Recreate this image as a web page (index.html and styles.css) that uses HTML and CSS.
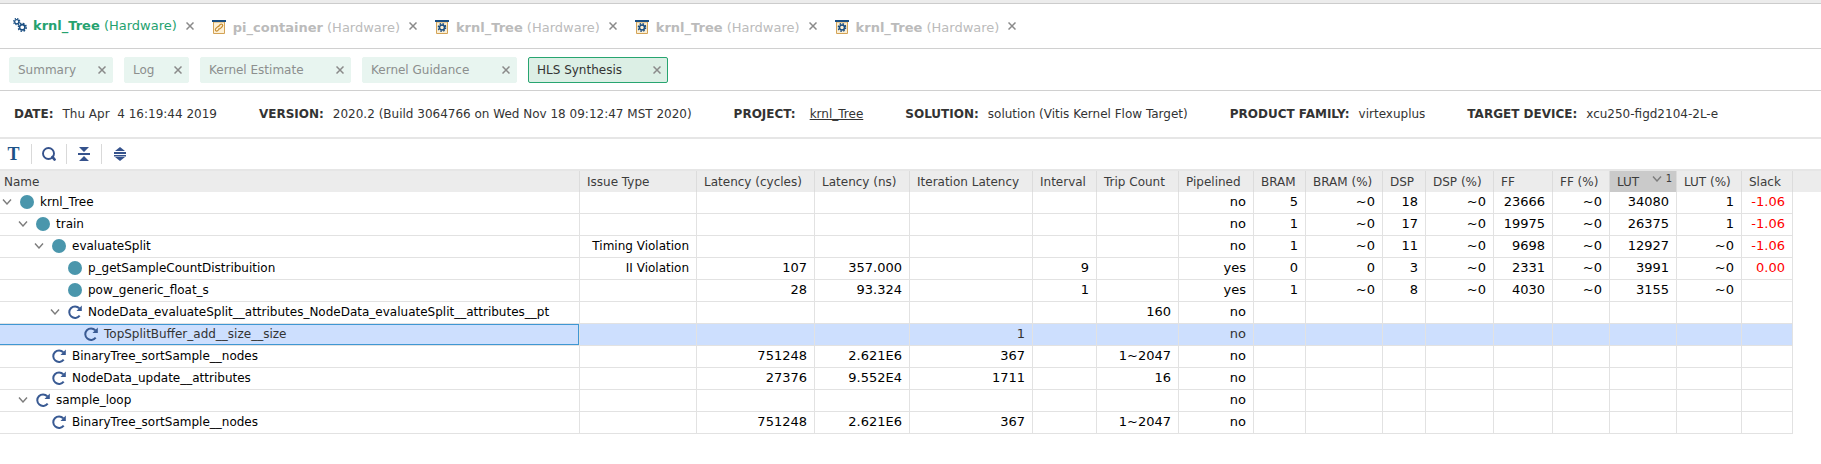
FILE: index.html
```html
<!DOCTYPE html>
<html lang="en">
<head>
<meta charset="utf-8">
<title>krnl_Tree - HLS Synthesis</title>
<link rel="stylesheet" href="styles.css">
</head>
<body>
<svg class="defs" aria-hidden="true">
  <symbol id="close" viewBox="0 0 8 8"><path d="M.5.5l7 7M7.500.500l-7 7" fill="none" stroke="#8a8a8a" stroke-width="1.500"/></symbol>
  <symbol id="gear" viewBox="0 0 10 10"><circle cx="5" cy="5" r="2.800" fill="none" stroke="#1b4f82" stroke-width="1.700"/><circle cx="5" cy="5" r="4.200" fill="none" stroke="#1b4f82" stroke-width="1.600" stroke-dasharray="1.800 1.500"/></symbol>
  <symbol id="gears" viewBox="0 0 14 14"><use href="#gear" x="0" y="0" width="7.500" height="7.500"/><use href="#gear" x="4.500" y="4.500" width="9.500" height="9.500"/></symbol>
  <symbol id="kernel" viewBox="0 0 14 14"><path d="M1.500 2h11v11.500h-11z" fill="#fbeed3" stroke="#d3a356"/><path d="M0 0h14v2H0z" fill="#1b4f82"/><use href="#gear" x="2.500" y="3" width="9" height="9"/></symbol>
  <symbol id="container" viewBox="0 0 14 14"><path d="M1.500 2h11v11.500h-11z" fill="#fdf0d6" stroke="#d3a356"/><path d="M0 0h14v2H0z" fill="#1b4f82"/><path d="M6.600 6.200l1.700-1.700a1.400 1.400 0 0 1 2 2L8.500 8.300a1.400 1.400 0 0 1-1.900 0M7.400 8.900l-1.700 1.700a1.400 1.400 0 0 1-2-2l1.800-1.800a1.400 1.400 0 0 1 1.900 0" fill="none" stroke="#c58a2c" stroke-width="1.100"/></symbol>
  <symbol id="chevron" viewBox="0 0 10 6"><path d="M1 .500l4 4.500 4-4.500" fill="none" stroke="#7c7c7c" stroke-width="1.400"/></symbol>
  <symbol id="func" viewBox="0 0 14 14"><circle cx="7" cy="7" r="7" fill="#4a96ac"/></symbol>
  <symbol id="loop" viewBox="0 0 14 14"><path d="M11.300 3.200A5.800 5.800 0 1 0 11.700 10.700" fill="none" stroke="#395a93" stroke-width="2"/><path d="M13.800.500v5.500H8.500z" fill="#395a93"/></symbol>
</svg>

<nav class="tabs" aria-label="Open reports">
  <div class="tab active"><svg class="icon"><use href="#gears"/></svg><a href="#" class="tab-title"><b>krnl_Tree</b> (Hardware)</a><button class="close" aria-label="Close krnl_Tree"><svg><use href="#close"/></svg></button></div>
  <div class="tab"><svg class="icon"><use href="#container"/></svg><a href="#" class="tab-title"><b>pi_container</b> (Hardware)</a><button class="close" aria-label="Close pi_container"><svg><use href="#close"/></svg></button></div>
  <div class="tab"><svg class="icon"><use href="#kernel"/></svg><a href="#" class="tab-title"><b>krnl_Tree</b> (Hardware)</a><button class="close" aria-label="Close krnl_Tree"><svg><use href="#close"/></svg></button></div>
  <div class="tab"><svg class="icon"><use href="#kernel"/></svg><a href="#" class="tab-title"><b>krnl_Tree</b> (Hardware)</a><button class="close" aria-label="Close krnl_Tree"><svg><use href="#close"/></svg></button></div>
  <div class="tab"><svg class="icon"><use href="#kernel"/></svg><a href="#" class="tab-title"><b>krnl_Tree</b> (Hardware)</a><button class="close" aria-label="Close krnl_Tree"><svg><use href="#close"/></svg></button></div>
</nav>

<nav class="views" aria-label="Views">
  <div class="view w-summary"><a href="#">Summary</a><button class="close" aria-label="Close Summary"><svg><use href="#close"/></svg></button></div>
  <div class="view w-log"><a href="#">Log</a><button class="close" aria-label="Close Log"><svg><use href="#close"/></svg></button></div>
  <div class="view w-estimate"><a href="#">Kernel Estimate</a><button class="close" aria-label="Close Kernel Estimate"><svg><use href="#close"/></svg></button></div>
  <div class="view w-guidance"><a href="#">Kernel Guidance</a><button class="close" aria-label="Close Kernel Guidance"><svg><use href="#close"/></svg></button></div>
  <div class="view w-hls current"><a href="#" aria-current="page">HLS Synthesis</a><button class="close" aria-label="Close HLS Synthesis"><svg><use href="#close"/></svg></button></div>
</nav>

<dl class="info">
  <div><dt>DATE:</dt><dd>Thu Apr  4 16:19:44 2019</dd></div>
  <div><dt>VERSION:</dt><dd>2020.2 (Build 3064766 on Wed Nov 18 09:12:47 MST 2020)</dd></div>
  <div class="project"><dt>PROJECT:</dt><dd><a href="#">krnl_Tree</a></dd></div>
  <div><dt>SOLUTION:</dt><dd>solution (Vitis Kernel Flow Target)</dd></div>
  <div><dt>PRODUCT FAMILY:</dt><dd>virtexuplus</dd></div>
  <div><dt>TARGET DEVICE:</dt><dd>xcu250-figd2104-2L-e</dd></div>
</dl>

<div class="toolbar" role="toolbar" aria-label="Table tools">
  <button class="tool text-tool" aria-label="Text">T</button>
  <button class="tool" aria-label="Search"><svg viewBox="0 0 14 14"><circle cx="6.500" cy="6.500" r="5.500" fill="none" stroke="#35528c" stroke-width="1.900"/><path d="M10.500 10l2 2.500" stroke="#35528c" stroke-width="2.800" stroke-linecap="round"/></svg></button>
  <button class="tool" aria-label="Collapse all"><svg viewBox="0 0 14 14"><path d="M2 0h10L7 5zM1 6h12v2H1zM7 9l5 5H2z" fill="#35528c"/></svg></button>
  <button class="tool" aria-label="Expand all"><svg viewBox="0 0 14 14"><path d="M7 0l5 4H2zM1 5h12v2H1zM1 8h12v1.500H1zM2 10h10l-5 4z" fill="#35528c"/></svg></button>
</div>

<main class="report">
<table>
  <colgroup><col class="c-name"><col class="c-issue"><col class="c-cycles"><col class="c-ns"><col class="c-iter"><col class="c-int"><col class="c-trip"><col class="c-pipe"><col class="c-bram"><col class="c-bramp"><col class="c-dsp"><col class="c-dspp"><col class="c-ff"><col class="c-ffp"><col class="c-lut"><col class="c-lutp"><col class="c-slack"><col></colgroup>
  <thead>
    <tr><th>Name</th><th>Issue Type</th><th>Latency (cycles)</th><th>Latency (ns)</th><th>Iteration Latency</th><th>Interval</th><th>Trip Count</th><th>Pipelined</th><th>BRAM</th><th>BRAM (%)</th><th>DSP</th><th>DSP (%)</th><th>FF</th><th>FF (%)</th><th class="sorted" aria-sort="descending"><button class="sort"><span>LUT</span><svg><use href="#chevron"/></svg><small>1</small></button></th><th>LUT (%)</th><th>Slack</th><td class="rest"></td></tr>
  </thead>
  <tbody>
    <tr><th><div class="node l0"><button class="toggle" aria-label="Collapse"><svg><use href="#chevron"/></svg></button><svg class="icon"><use href="#func"/></svg>krnl_Tree</div></th><td></td><td></td><td></td><td></td><td></td><td></td><td>no</td><td>5</td><td>~0</td><td>18</td><td>~0</td><td>23666</td><td>~0</td><td>34080</td><td>1</td><td class="bad">-1.06</td></tr>
    <tr><th><div class="node l1"><button class="toggle" aria-label="Collapse"><svg><use href="#chevron"/></svg></button><svg class="icon"><use href="#func"/></svg>train</div></th><td></td><td></td><td></td><td></td><td></td><td></td><td>no</td><td>1</td><td>~0</td><td>17</td><td>~0</td><td>19975</td><td>~0</td><td>26375</td><td>1</td><td class="bad">-1.06</td></tr>
    <tr><th><div class="node l2"><button class="toggle" aria-label="Collapse"><svg><use href="#chevron"/></svg></button><svg class="icon"><use href="#func"/></svg>evaluateSplit</div></th><td class="issue">Timing Violation</td><td></td><td></td><td></td><td></td><td></td><td>no</td><td>1</td><td>~0</td><td>11</td><td>~0</td><td>9698</td><td>~0</td><td>12927</td><td>~0</td><td class="bad">-1.06</td></tr>
    <tr><th><div class="node leaf l3"><svg class="icon"><use href="#func"/></svg>p_getSampleCountDistribuition</div></th><td class="issue">II Violation</td><td>107</td><td>357.000</td><td></td><td>9</td><td></td><td>yes</td><td>0</td><td>0</td><td>3</td><td>~0</td><td>2331</td><td>~0</td><td>3991</td><td>~0</td><td class="bad">0.00</td></tr>
    <tr><th><div class="node leaf l3"><svg class="icon"><use href="#func"/></svg>pow_generic_float_s</div></th><td></td><td>28</td><td>93.324</td><td></td><td>1</td><td></td><td>yes</td><td>1</td><td>~0</td><td>8</td><td>~0</td><td>4030</td><td>~0</td><td>3155</td><td>~0</td><td></td></tr>
    <tr><th><div class="node l3"><button class="toggle" aria-label="Collapse"><svg><use href="#chevron"/></svg></button><svg class="icon"><use href="#loop"/></svg>NodeData_evaluateSplit__attributes_NodeData_evaluateSplit__attributes__pt</div></th><td></td><td></td><td></td><td></td><td></td><td>160</td><td>no</td><td></td><td></td><td></td><td></td><td></td><td></td><td></td><td></td><td></td></tr>
    <tr class="selected"><th><div class="node leaf l4"><svg class="icon"><use href="#loop"/></svg>TopSplitBuffer_add__size__size</div></th><td></td><td></td><td></td><td>1</td><td></td><td></td><td>no</td><td></td><td></td><td></td><td></td><td></td><td></td><td></td><td></td><td></td></tr>
    <tr><th><div class="node leaf l2"><svg class="icon"><use href="#loop"/></svg>BinaryTree_sortSample__nodes</div></th><td></td><td>751248</td><td>2.621E6</td><td>367</td><td></td><td>1~2047</td><td>no</td><td></td><td></td><td></td><td></td><td></td><td></td><td></td><td></td><td></td></tr>
    <tr><th><div class="node leaf l2"><svg class="icon"><use href="#loop"/></svg>NodeData_update__attributes</div></th><td></td><td>27376</td><td>9.552E4</td><td>1711</td><td></td><td>16</td><td>no</td><td></td><td></td><td></td><td></td><td></td><td></td><td></td><td></td><td></td></tr>
    <tr><th><div class="node l1"><button class="toggle" aria-label="Collapse"><svg><use href="#chevron"/></svg></button><svg class="icon"><use href="#loop"/></svg>sample_loop</div></th><td></td><td></td><td></td><td></td><td></td><td></td><td>no</td><td></td><td></td><td></td><td></td><td></td><td></td><td></td><td></td><td></td></tr>
    <tr><th><div class="node leaf l2"><svg class="icon"><use href="#loop"/></svg>BinaryTree_sortSample__nodes</div></th><td></td><td>751248</td><td>2.621E6</td><td>367</td><td></td><td>1~2047</td><td>no</td><td></td><td></td><td></td><td></td><td></td><td></td><td></td><td></td><td></td></tr>
  </tbody>
</table>
</main>
</body>
</html>
```
FILE: styles.css
```css
* { box-sizing: border-box; }

body {
  margin: 0;
  border-top: 3px solid #ececec;
  background: #fff;
  color: #000;
  font: 12px/16px "DejaVu Sans", sans-serif;
  white-space: nowrap;
}

button {
  margin: 0;
  padding: 0;
  border: 0;
  background: none;
  color: inherit;
  font: inherit;
  cursor: pointer;
}

a { color: inherit; text-decoration: none; }
svg { display: block; flex: none; }
.defs { position: absolute; width: 0; height: 0; }
.icon { width: 14px; height: 14px; }
.close svg { width: 8px; height: 8px; }

.tabs {
  display: flex;
  align-items: flex-start;
  gap: 18px;
  padding: 14px 13px;
  height: 46px;
  border-top: 1px solid #ccc;
  border-bottom: 1px solid #d0d0d0;
  font-size: 13px;
}

.tab {
  display: flex;
  align-items: flex-start;
  color: #bbb;
}

.tab .icon { margin: 2px 7px 0 0; }
.tab .close { margin: 4px 0 0 9px; }
.tab-title { padding-top: 2px; }
.tab.active { color: #25a26f; }
.tab.active .icon { margin: 0 6px 0 0; }
.tab.active .tab-title { padding-top: 0; }

.views {
  display: flex;
  gap: 11px;
  padding: 8px 9px 7px;
  border-bottom: 1px solid #d0d0d0;
}

.view {
  display: flex;
  align-items: center;
  justify-content: space-between;
  height: 26px;
  padding: 0 6px 0 8px;
  border: 1px solid #e8f5f0;
  border-radius: 2px;
  background: #e8f5f0;
  color: #8c8f8e;
}

.view.current {
  border-color: #27a570;
  background: #dcefe5;
  color: #333;
}

.w-summary { width: 104px; }
.w-log { width: 65px; }
.w-estimate { width: 151px; }
.w-guidance { width: 155px; }
.w-hls { width: 140px; }

.info {
  display: flex;
  gap: 42px;
  margin: 0;
  padding: 15px 14px;
  border-bottom: 2px solid #e6e6e6;
  color: #333;
  white-space: pre;
}

.info div { display: flex; gap: 9px; }
.info .project { gap: 14px; }
.info dt { font-weight: bold; }
.info dd { margin: 0; }
.info a { text-decoration: underline; }

.toolbar {
  display: flex;
  align-items: center;
  height: 32px;
  padding-bottom: 1px;
  border-bottom: 2px solid #e6e6e6;
}

.tool {
  display: flex;
  align-items: center;
  justify-content: center;
  width: 35px;
  height: 20px;
  border-right: 1px solid #d9d9d9;
}

.tool:first-child { width: 32px; padding-right: 4px; }
.tool:last-child { border-right: 0; }
.tool svg { width: 14px; height: 14px; }
.text-tool { color: #1b5288; font: bold 18px/20px "Liberation Serif", serif; }

table {
  width: 100%;
  border-collapse: separate;
  border-spacing: 0;
  table-layout: fixed;
}

.c-name { width: 580px; }
.c-issue { width: 117px; }
.c-cycles { width: 118px; }
.c-ns { width: 95px; }
.c-iter { width: 123px; }
.c-int { width: 64px; }
.c-trip { width: 82px; }
.c-pipe { width: 75px; }
.c-bram { width: 52px; }
.c-bramp { width: 77px; }
.c-dsp { width: 43px; }
.c-dspp { width: 68px; }
.c-ff { width: 59px; }
.c-ffp { width: 57px; }
.c-lut { width: 67px; }
.c-lutp { width: 65px; }
.c-slack { width: 51px; }

th, td { padding: 0; font-weight: normal; }

thead th, .rest {
  height: 21px;
  padding-left: 7px;
  border-right: 1px solid #dcdcdc;
  background: #ececec;
  color: #3c3c3c;
  text-align: left;
}

thead th:first-child { padding-left: 4px; }
.rest { border-right: 0; }
thead .sorted { background: #cacaca; }

.sort { display: flex; align-items: flex-start; width: 100%; padding-right: 4px; }
.sort svg { width: 10px; height: 6px; margin: 2px 4px 0 auto; }
.sort small { font-size: 10px; line-height: 10px; }

tbody th, tbody td {
  height: 22px;
  border-right: 1px solid #e2e2e2;
  border-bottom: 1px solid #e2e2e2;
}

tbody td { padding: 0 7px 1px 0; font-size: 13px; text-align: right; }
tbody .issue { font-size: 12px; }
.bad { color: #f00; }

.node { display: flex; align-items: center; height: 21px; padding-bottom: 1px; }
.node .icon { margin-right: 6px; }
.toggle { flex: none; width: 18px; }
.toggle svg { width: 10px; height: 6px; }
.l0 { padding-left: 2px; }
.l1 { padding-left: 18px; }
.l2 { padding-left: 34px; }
.l3 { padding-left: 50px; }
.leaf.l2 { padding-left: 52px; }
.leaf.l3 { padding-left: 68px; }
.leaf.l4 { padding-left: 84px; }

.selected { background: #cddffe; color: #333; }
.selected th { box-shadow: inset -1px 0 #3f97d3, inset 0 1px #3f97d3, inset 0 -1px #3f97d3; }
```
